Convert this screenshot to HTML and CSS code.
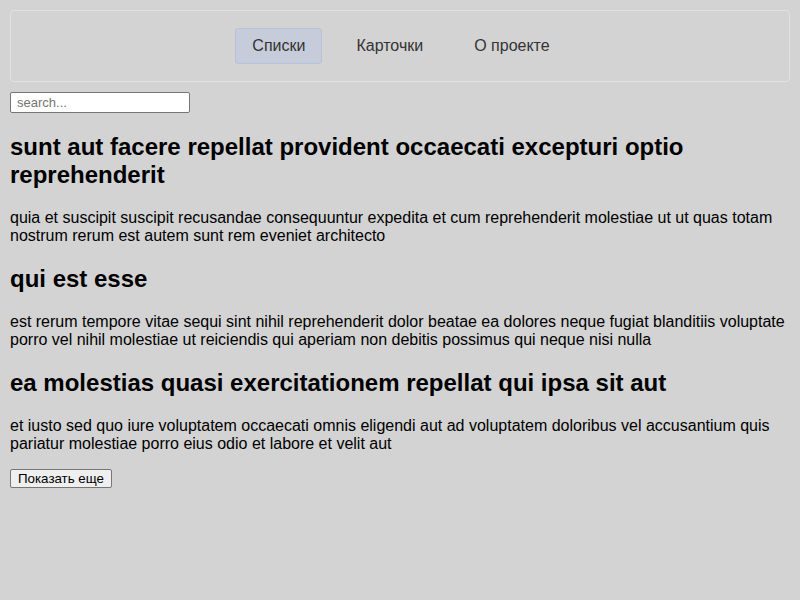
FILE: index.html
```html
<!DOCTYPE html>
<html lang="ru">
<head>
<meta charset="utf-8">
<title>Posts</title>
<link rel="stylesheet" href="styles.css">
</head>
<body>
<header class="navbar">
  <nav class="nav">
    <a class="nav-link active" href="#">Списки</a>
    <a class="nav-link" href="#">Карточки</a>
    <a class="nav-link" href="#">О проекте</a>
  </nav>
</header>
<input class="search" type="text" placeholder="search...">
<main class="posts">
  <article class="post">
    <h2>sunt aut facere repellat provident occaecati excepturi optio reprehenderit</h2>
    <p>quia et suscipit suscipit recusandae consequuntur expedita et cum reprehenderit molestiae ut ut quas totam nostrum rerum est autem sunt rem eveniet architecto</p>
  </article>
  <article class="post">
    <h2>qui est esse</h2>
    <p>est rerum tempore vitae sequi sint nihil reprehenderit dolor beatae ea dolores neque fugiat blanditiis voluptate porro vel nihil molestiae ut reiciendis qui aperiam non debitis possimus qui neque nisi nulla</p>
  </article>
  <article class="post">
    <h2>ea molestias quasi exercitationem repellat qui ipsa sit aut</h2>
    <p>et iusto sed quo iure voluptatem occaecati omnis eligendi aut ad voluptatem doloribus vel accusantium quis pariatur molestiae porro eius odio et labore et velit aut</p>
  </article>
</main>
<button class="more" type="button">Показать еще</button>
</body>
</html>
```
FILE: styles.css
```css
html {
  background: #d3d3d3;
}
body {
  margin: 10px;
  font-family: "Liberation Sans", Arial, sans-serif;
  color: #000;
}
.navbar {
  border: 1px solid #e2e2e2;
  border-radius: 4px;
  padding: 17px 0 17px 2px;
  margin-bottom: 10px;
}
.nav {
  display: flex;
  justify-content: center;
  gap: 17px;
}
.nav-link {
  display: block;
  padding: 8px 16px;
  border: 1px solid transparent;
  border-radius: 3px;
  color: #333;
  text-decoration: none;
  font-size: 16px;
  line-height: 18px;
}
.nav-link.active {
  background: #c6ccd9;
  border-color: #b8c2d8;
}
.search {
  display: block;
  box-sizing: border-box;
  width: 180px;
  height: 21px;
  font-family: "Liberation Sans", Arial, sans-serif;
  font-size: 13px;
  padding: 1px 6px;
  border: 1px solid #767676;
  border-radius: 2px;
  background: #fff;
  margin: 0;
}
.search::placeholder {
  color: #757575;
}
.post h2 {
  font-size: 24px;
  margin: 20px 0;
}
.post p {
  font-size: 16px;
  margin: 16px 0;
}
.more {
  font-family: "Liberation Sans", Arial, sans-serif;
  font-size: 13.33px;
  line-height: 15px;
  padding: 1px 7px;
  border: 1px solid #767676;
  border-radius: 2px;
  background: #efefef;
  color: #000;
}
```
